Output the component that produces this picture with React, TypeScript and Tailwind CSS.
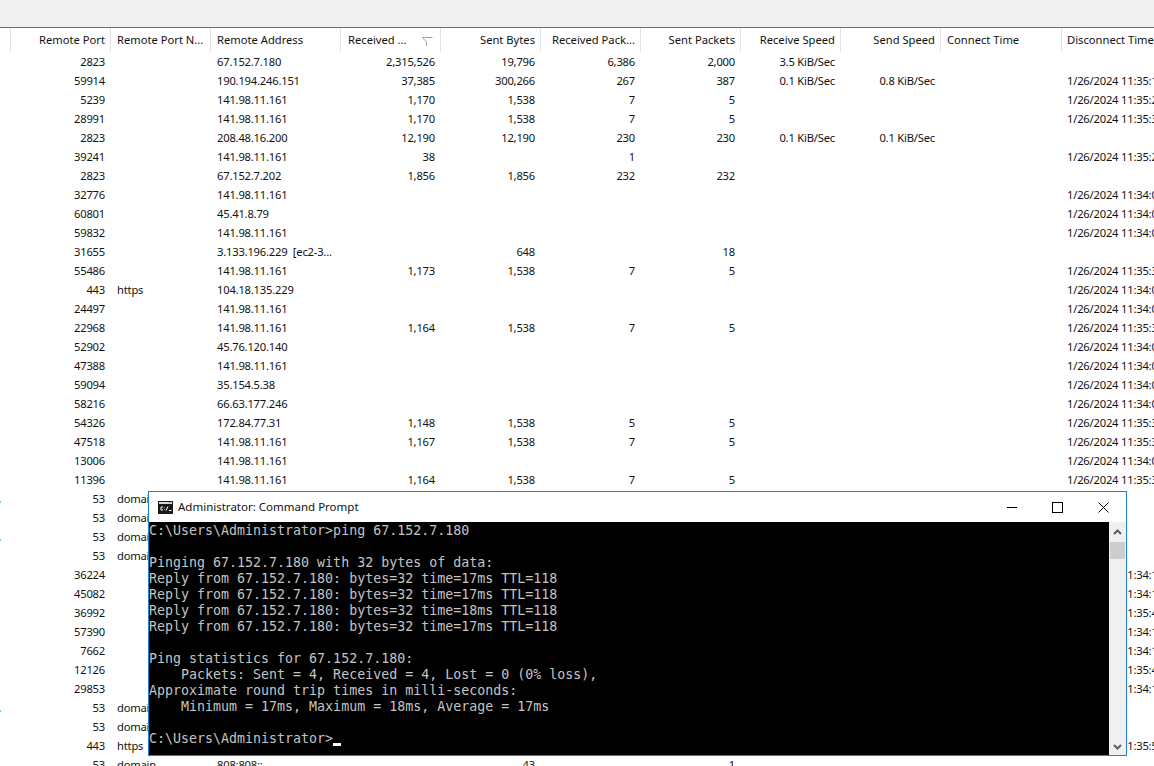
import React from "react";

const GRID = "grid grid-cols-[11px_100px_100px_130px_100px_100px_100px_100px_100px_100px_121px_200px]";

type Col = { label: string; cls: string };
const cols: Col[] = [
  { label: "Remote Port", cls: "justify-end pr-[5px]" },
  { label: "Remote Port N...", cls: "pl-[6px]" },
  { label: "Remote Address", cls: "pl-[6px]" },
  { label: "Received ...", cls: "pl-[7px]" },
  { label: "Sent Bytes", cls: "justify-end pr-[5px]" },
  { label: "Received Pack...", cls: "justify-end pr-[5px]" },
  { label: "Sent Packets", cls: "justify-end pr-[5px]" },
  { label: "Receive Speed", cls: "justify-end pr-[5px]" },
  { label: "Send Speed", cls: "justify-end pr-[5px]" },
  { label: "Connect Time", cls: "pl-[6px]" },
  { label: "Disconnect Time", cls: "pl-[5px]" },
];

const A = "141.98.11.161";
const d = (t: string) => "1/26/2024 11:" + t;

// port, name, address, recvBytes, sentBytes, recvPk, sentPk, recvSpeed, sendSpeed, connect, disconnect, marker
const rows: (string | boolean)[][] = [
  ["2823", "", "67.152.7.180", "2,315,526", "19,796", "6,386", "2,000", "3.5 KiB/Sec", "", "", ""],
  ["59914", "", "190.194.246.151", "37,385", "300,266", "267", "387", "0.1 KiB/Sec", "0.8 KiB/Sec", "", d("35:14")],
  ["5239", "", A, "1,170", "1,538", "7", "5", "", "", "", d("35:27")],
  ["28991", "", A, "1,170", "1,538", "7", "5", "", "", "", d("35:31")],
  ["2823", "", "208.48.16.200", "12,190", "12,190", "230", "230", "0.1 KiB/Sec", "0.1 KiB/Sec", "", ""],
  ["39241", "", A, "38", "", "1", "", "", "", "", d("35:24")],
  ["2823", "", "67.152.7.202", "1,856", "1,856", "232", "232", "", "", "", ""],
  ["32776", "", A, "", "", "", "", "", "", "", d("34:05")],
  ["60801", "", "45.41.8.79", "", "", "", "", "", "", "", d("34:05")],
  ["59832", "", A, "", "", "", "", "", "", "", d("34:05")],
  ["31655", "", "3.133.196.229  [ec2-3...", "", "648", "", "18", "", "", "", ""],
  ["55486", "", A, "1,173", "1,538", "7", "5", "", "", "", d("35:31")],
  ["443", "https", "104.18.135.229", "", "", "", "", "", "", "", d("34:05")],
  ["24497", "", A, "", "", "", "", "", "", "", d("34:05")],
  ["22968", "", A, "1,164", "1,538", "7", "5", "", "", "", d("35:31")],
  ["52902", "", "45.76.120.140", "", "", "", "", "", "", "", d("34:05")],
  ["47388", "", A, "", "", "", "", "", "", "", d("34:05")],
  ["59094", "", "35.154.5.38", "", "", "", "", "", "", "", d("34:05")],
  ["58216", "", "66.63.177.246", "", "", "", "", "", "", "", d("34:05")],
  ["54326", "", "172.84.77.31", "1,148", "1,538", "5", "5", "", "", "", d("35:31")],
  ["47518", "", A, "1,167", "1,538", "7", "5", "", "", "", d("35:31")],
  ["13006", "", A, "", "", "", "", "", "", "", d("34:05")],
  ["11396", "", A, "1,164", "1,538", "7", "5", "", "", "", d("35:31")],
  ["53", "domain", "", "", "", "", "", "", "", "", "", true],
  ["53", "domain", "", "", "", "", "", "", "", "", ""],
  ["53", "domain", "", "", "", "", "", "", "", "", "", true],
  ["53", "domain", "", "", "", "", "", "", "", "", ""],
  ["36224", "", "", "", "", "", "", "", "", "", d("34:17")],
  ["45082", "", "", "", "", "", "", "", "", "", d("34:17")],
  ["36992", "", "", "", "", "", "", "", "", "", d("35:47")],
  ["57390", "", "", "", "", "", "", "", "", "", d("34:17")],
  ["7662", "", "", "", "", "", "", "", "", "", d("34:17")],
  ["12126", "", "", "", "", "", "", "", "", "", d("35:47")],
  ["29853", "", "", "", "", "", "", "", "", "", d("34:17")],
  ["53", "domain", "", "", "", "", "", "", "", "", "", true],
  ["53", "domain", "", "", "", "", "", "", "", "", ""],
  ["443", "https", "", "", "", "", "", "", "", "", d("35:52")],
  ["53", "domain", "808:808::", "", "43", "", "1", "", "", "", ""],
];

const cellCls = [
  "pr-[6px] text-right",
  "pl-[6px]",
  "pl-[6px]",
  "pr-[6px] text-right",
  "pr-[6px] text-right",
  "pr-[6px] text-right",
  "pr-[6px] text-right",
  "pr-[6px] text-right",
  "pr-[6px] text-right",
  "pl-[6px]",
  "pl-[5px]",
];

const consoleLines = [
  "C:\\Users\\Administrator>ping 67.152.7.180",
  "",
  "Pinging 67.152.7.180 with 32 bytes of data:",
  "Reply from 67.152.7.180: bytes=32 time=17ms TTL=118",
  "Reply from 67.152.7.180: bytes=32 time=17ms TTL=118",
  "Reply from 67.152.7.180: bytes=32 time=18ms TTL=118",
  "Reply from 67.152.7.180: bytes=32 time=17ms TTL=118",
  "",
  "Ping statistics for 67.152.7.180:",
  "    Packets: Sent = 4, Received = 4, Lost = 0 (0% loss),",
  "Approximate round trip times in milli-seconds:",
  "    Minimum = 17ms, Maximum = 18ms, Average = 17ms",
  "",
];

function SortIcon() {
  return (
    <svg width="11" height="9" viewBox="0 0 11 9" fill="none" stroke="#a3a3a3" className="mt-[3px] shrink-0">
      <path d="M0 .5H10.5M1 1.5L4.5 4.5V9" />
    </svg>
  );
}

function CmdIcon() {
  return (
    <svg width="15" height="13" viewBox="0 0 15 13" className="shrink-0">
      <rect x="0" y="0" width="15" height="13" fill="#1a1a1a" />
      <rect x="1" y="1" width="13" height="2" fill="#d8d8d8" />
      <rect x="11" y="1" width="1" height="1" fill="#555" />
      <path d="M5 6H3V9H5M6.5 6.5V7M6.5 8.5V9M8 9.5L10 5.5M11 9.5H13.5" stroke="#fff" strokeWidth="1" fill="none" />
    </svg>
  );
}

export default function App() {
  return (
    <div className="relative h-[766px] w-[1154px] overflow-hidden bg-white font-['Noto_Sans',sans-serif] text-[11.2px] text-[#111]">
      <div className="h-[28px] border-b border-[#6a6a6a] bg-[#f0f0f0]" />

      <div className={GRID + " h-[24px] leading-[24px]"}>
        <div className="border-r border-[#e3e3e3]" />
        {cols.map((c) => (
          <div
            key={c.label}
            className={"flex items-center overflow-hidden whitespace-nowrap border-r border-[#e3e3e3] pb-[1px] " + c.cls}
          >
            <span>{c.label}</span>
            {c.label === "Received ..." && (
              <span className="ml-[15px] flex">
                <SortIcon />
              </span>
            )}
          </div>
        ))}
      </div>

      <div className="tracking-[-0.2px]">
        {rows.map((r, i) => (
          <div key={i} className={GRID + " h-[19px] leading-[19px]"}>
            <div>{r[11] === true && <div className="mt-[12px] h-[2px] w-px bg-[#66ccff]" />}</div>
            {r.slice(0, 11).map((v, j) => (
              <div key={j} className={"overflow-hidden whitespace-pre " + cellCls[j]}>
                {v}
              </div>
            ))}
          </div>
        ))}
      </div>

      <div className="absolute left-[148px] top-[491px] flex h-[265px] w-[979px] flex-col border border-[#1b83d4] bg-white">
        <div className="flex h-[30px] shrink-0 items-center pl-[9px]">
          <CmdIcon />
          <span className="ml-[5px] text-[11.5px] text-[#111]">Administrator: Command Prompt</span>
          <div className="ml-auto flex items-center">
            <svg width="10" height="10" viewBox="0 0 10 10" className="mr-[35px]" fill="none" stroke="#000">
              <path d="M0 5.5H10" />
            </svg>
            <svg width="11" height="11" viewBox="0 0 11 11" className="mr-[35px]" fill="none" stroke="#000">
              <rect x=".5" y=".5" width="10" height="10" />
            </svg>
            <svg width="11" height="11" viewBox="0 0 11 11" className="mr-[17px]" fill="none" stroke="#000">
              <path d="M.5 .5L10.5 10.5M10.5 .5L.5 10.5" />
            </svg>
          </div>
        </div>
        <div className="flex min-h-0 flex-1">
          <div className="min-w-0 flex-1 bg-black pt-[1px] font-['DejaVu_Sans_Mono',monospace] text-[13.3px] leading-[16px] text-[#c4c4c4]">
            {consoleLines.map((l, i) => (
              <div key={i} className="h-[16px] whitespace-pre">
                {l}
              </div>
            ))}
            <div className="h-[16px] whitespace-pre">
              C:\Users\Administrator&gt;
              <span className="inline-block h-[3px] w-[8px] bg-white align-[-3px]" />
            </div>
          </div>
          <div className="flex w-[17px] shrink-0 flex-col items-center bg-[#f0f0f0]">
            <div className="flex h-[20px] w-full shrink-0 items-center justify-center">
              <svg width="9" height="6" viewBox="0 0 9 6" fill="none" stroke="#606060" strokeWidth="2">
                <path d="M1 5L4.5 1.5L8 5" />
              </svg>
            </div>
            <div className="h-[17px] w-[15px] shrink-0 bg-[#cdcdcd]" />
            <div className="flex-1" />
            <div className="flex h-[17px] w-full shrink-0 items-center justify-center">
              <svg width="9" height="6" viewBox="0 0 9 6" fill="none" stroke="#606060" strokeWidth="2">
                <path d="M1 1L4.5 4.5L8 1" />
              </svg>
            </div>
          </div>
        </div>
      </div>
    </div>
  );
}
